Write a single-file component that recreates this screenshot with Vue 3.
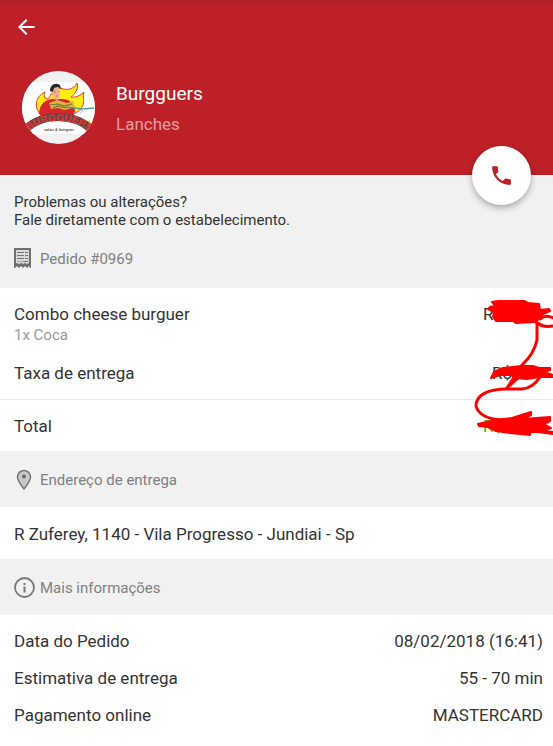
<script setup>
const details = [
  { label: 'Data do Pedido', value: '08/02/2018 (16:41)' },
  { label: 'Estimativa de entrega', value: '55 - 70 min' },
  { label: 'Pagamento online', value: 'MASTERCARD' },
]
</script>

<template>
  <main class="page">
    <header class="hero">
      <button class="back" type="button" aria-label="Voltar">
        <svg viewBox="0 0 24 24" width="24" height="24"><path fill="#fff" d="M20.500 10.900H7.900l5.500-5.500L12 4l-8 8 8 8 1.400-1.400L7.900 13.100h12.600z" /></svg>
      </button>
      <div class="store">
        <svg class="logo" viewBox="0 0 73 73" width="73" height="73" aria-hidden="true">
          <defs>
            <clipPath id="round"><circle cx="36.500" cy="36.500" r="36.500" /></clipPath>
            <path id="arc" d="M6 60Q18 50 36 50Q55 50 68 61" />
          </defs>
          <g clip-path="url(#round)">
            <path fill="#f1f1f1" d="M0 0h73v73H0z" />
            <path fill="#fff" d="M0 11h73v52H0z" />
            <path fill="#ffec12" stroke="#e7382b" stroke-width="1" d="M18 43C12 36 13 26 23 21C21 25 23 28 26 28C29 24 31 18 38 17C46 20 52 18 55 12C57 18 53 23 49 26C55 27 60 23 62 21C60 25 63 29 61 34C59 39 54 43 49 43z" />
            <path fill="#d9242b" d="M17 43C17 36 21 29 30 28L40 28C48 28 53 33 53 42L50 46H20z" />
            <path fill="#efb58f" d="M31 17L37 16L38 23L36 29L31 28L30 22z" />
            <path fill="#29282b" d="M28 20C28 14 33 11 38 14L39 18L36 16L32 17L31 21z" />
            <path stroke="#8b4a35" stroke-width=".7" d="M32 21h2m2 0h1m-3 4h2" />
            <path fill="#ddb04b" d="M27 32L35 29L45 32L51 30L53 36L43 39L36 37L29 38z" />
            <path fill="none" stroke="#76782b" stroke-width="1.200" d="M28 34l8-1 6 2 8-2M31 37l5-2 8 2" />
            <path fill="none" stroke="#5b9697" stroke-width="1.300" d="M43 36L60 38L72 37" />
            <path fill="none" stroke="#aaa" stroke-width=".6" d="M51 42l10-3-3 4" />
            <path fill="#ffec12" d="M62 52l5-3 3 5-4 3z" />
            <path fill="none" stroke="#6a4446" stroke-width="8" d="M5 57Q17 46 36 46Q56 46 69 58" />
            <text class="logo-name"><textPath href="#arc" startOffset="50%" text-anchor="middle">BURGGUERS</textPath></text>
            <text class="logo-sub" x="37" y="60" text-anchor="middle">salas &amp; burguer</text>
          </g>
        </svg>
        <div>
          <h1 class="name">Burgguers</h1>
          <p class="kind">Lanches</p>
        </div>
      </div>
      <button class="call" type="button" aria-label="Ligar">
        <svg viewBox="0 0 24 24" width="25" height="25"><path fill="#bd2026" d="M6.620 10.790c1.440 2.830 3.760 5.140 6.590 6.590l2.200-2.200c.27-.27.67-.36 1.020-.24 1.120.37 2.330.57 3.570.57.55 0 1 .45 1 1V20c0 .55-.45 1-1 1C10.610 21 3 13.390 3 4c0-.55.45-1 1-1h3.500c.55 0 1 .45 1 1 0 1.250.2 2.450.57 3.570.11.35.03.74-.25 1.020z" /></svg>
      </button>
    </header>

    <section class="help">
      <p>Problemas ou alterações?<br>Fale diretamente com o estabelecimento.</p>
      <h2 class="heading">
        <svg viewBox="0 0 22 22" width="22" height="22" aria-hidden="true">
          <path fill="#6f6f6f" d="M0 0h17v20h-1l-1-2-2 2-2-2-2 2-2-2-2 2-2-2-2 2H0z" />
          <path fill="#d9d9d9" d="M2 2h13v13l-2 1-2-1-2 1-2-1-2 1-3-1z" />
          <path stroke="#777" fill="none" d="M3 4.500h7m1 0h3M3 7.500h7m1 0h3M3 10.500h7m1 0h3M10 13.500h4" />
          <path stroke="#aaa" fill="none" d="M3 13.500h7" />
        </svg>
        Pedido #0969
      </h2>
    </section>

    <section class="order">
      <div class="items">
        <div class="row">
          <div>
            <p>Combo cheese burguer</p>
            <p class="extra">1x Coca</p>
          </div>
          <span class="price wide">R$</span>
        </div>
        <div class="row"><span>Taxa de entrega</span><span class="price">R$</span></div>
      </div>
      <div class="row total"><span>Total</span><span class="price wide green">R$</span></div>
      <svg class="marks" viewBox="0 0 93 155" width="93" height="155" aria-hidden="true">
        <g fill="#f00" stroke="#f00" stroke-width="2" stroke-linejoin="round">
          <path d="M32 12L38 11L64 11L68 13L79 14L80 20L89 19L90 21L83 24L80 28L75 32L56 33L53 31L36 31L33 27L34 22L28 19L30 17L35 16z" />
          <path d="M31 88L34 82L43 78L62 76L73 76L79 78L90 78V80L84 82L93 85V87L80 87L67 89L55 88L51 85L40 85z" />
          <path d="M18 134L36 130L52 128L71 122V125L63 129L90 127V131L84 134L91 138L83 141L93 142V144L78 142L70 142V145L50 143L36 141L28 137L19 136z" />
        </g>
        <g fill="none" stroke="#f00" stroke-width="3" stroke-linecap="round" stroke-linejoin="round">
          <path d="M80 29Q86 24 93 28M76 32Q83 38 93 36" />
          <path d="M77 33V50Q74 64 62 75L47 98L58 88" />
          <path d="M80 87Q73 98 62 99H47C28 99 16 105 16 116C18 124 28 130 44 130" />
        </g>
      </svg>
    </section>

    <h2 class="heading band">
      <svg viewBox="0 0 22 22" width="22" height="22" aria-hidden="true">
        <path fill="#c9c9c9" stroke="#777" stroke-width="1.500" d="M10 20C7 16 3.500 12 3.500 8a6.500 6.500 0 0 1 13 0C16.500 12 13 16 10 20z" />
        <circle cx="10" cy="7.500" r="2" fill="#666" />
      </svg>
      Endereço de entrega
    </h2>
    <p class="address">R Zuferey, 1140 - Vila Progresso - Jundiai - Sp</p>

    <h2 class="heading band">
      <svg viewBox="0 0 22 22" width="22" height="22" aria-hidden="true">
        <circle cx="10.500" cy="10.500" r="9.500" fill="none" stroke="#777" stroke-width="1.800" />
        <path fill="#777" d="M9.500 6h2v2h-2zM9.500 9.500h2v6h-2z" />
      </svg>
      Mais informações
    </h2>
    <dl class="details">
      <div v-for="item in details" :key="item.label" class="row">
        <dt>{{ item.label }}</dt>
        <dd>{{ item.value }}</dd>
      </div>
    </dl>
  </main>
</template>

<style>
body {
  margin: 0;
  background: #fff;
}
</style>

<style scoped>
.page {
  font: 17px/20px Roboto, sans-serif;
  color: #333;
  overflow-x: hidden;
}
h1, h2, p, dl, dd {
  margin: 0;
  font-weight: 400;
}
button {
  padding: 0;
  border: 0;
  cursor: pointer;
}
svg {
  display: block;
  flex: none;
}
.hero {
  position: relative;
  padding: 15px 22px 31px;
  background: linear-gradient(#ad1f26, #bd2027 6px);
}
.back {
  display: block;
  margin-left: -8px;
  background: none;
}
.store {
  display: flex;
  align-items: center;
  gap: 21px;
  margin-top: 32px;
}
.name {
  padding-top: 2px;
  font-size: 19px;
  line-height: 30px;
  color: #fff;
}
.kind {
  font-size: 17px;
  line-height: 30px;
  color: #e49c9f;
}
.logo-name {
  font: 700 10px "Liberation Sans", sans-serif;
  fill: #e8352f;
}
.logo-sub {
  font: 700 4px "Liberation Sans", sans-serif;
  fill: #555;
}
.call {
  position: absolute;
  right: 22px;
  bottom: -30px;
  display: flex;
  align-items: center;
  justify-content: center;
  width: 59px;
  height: 59px;
  border-radius: 50%;
  background: #fff;
  box-shadow: 0 3px 6px rgba(0, 0, 0, 0.3);
}
.help {
  padding: 18px 14px;
  background: #f1f1f1;
  font-size: 15px;
  line-height: 18px;
}
.heading {
  display: flex;
  align-items: center;
  gap: 4px;
  font-size: 15px;
  line-height: 22px;
  color: #808080;
}
.help .heading {
  margin-top: 19px;
}
.band {
  padding: 18px 14px 16px;
  background: #f1f1f1;
}
.order {
  position: relative;
}
.row {
  display: flex;
  justify-content: space-between;
}
.items {
  display: grid;
  gap: 17px;
  padding: 16px 10px 16px 14px;
  border-bottom: 1px solid #e8e8e8;
}
.extra {
  font-size: 15px;
  line-height: 22px;
  color: #999;
}
.total {
  padding: 16px 10px 15px 14px;
}
.price {
  width: 51px;
}
.wide {
  width: 60px;
}
.green {
  color: #5fa800;
}
.marks {
  position: absolute;
  top: 2px;
  right: 0;
}
.address {
  padding: 17px 14px 15px;
}
.details {
  display: grid;
  gap: 17px;
  padding: 16px 10px 20px 14px;
}
</style>
